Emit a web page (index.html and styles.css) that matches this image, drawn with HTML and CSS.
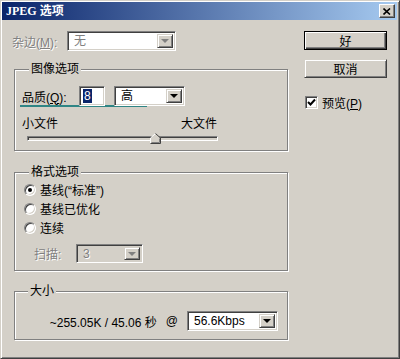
FILE: index.html
```html
<!DOCTYPE html>
<html lang="zh-CN">
<head>
    <meta charset="UTF-8">
    <title>JPEG 选项</title>
    <link rel="stylesheet" href="styles.css">
</head>
<body>
    <div class="window">
        <div class="titlebar">
            <span class="title">JPEG 选项</span>
            <div class="close-button">
                <svg width="8" height="7" viewBox="0 0 8 7">
                    <path d="M0.5 0.5 L7 6.5 M7 0.5 L0.5 6.5" stroke="#000" stroke-width="1.6" fill="none"/>
                </svg>
            </div>
        </div>

        <div class="body">
            <div class="main">
                <div class="matte-row">
                    <span class="matte-label disabled">杂边(<u>M</u>):</span>
                    <div class="combo sunken matte-combo">
                        <span class="combo-text disabled">无</span>
                        <span class="combo-arrow raised"><i class="arrow disabled-arrow"></i></span>
                    </div>
                </div>

                <div class="group group-image">
                    <div class="group-title">图像选项</div>
                    <div class="quality-row">
                        <span class="quality-label">品质(<u>Q</u>):</span>
                        <div class="text-input sunken"><span class="selected-text">8</span></div>
                        <div class="combo sunken quality-combo">
                            <span class="combo-text">高</span>
                            <span class="combo-arrow raised"><i class="arrow"></i></span>
                        </div>
                    </div>
                    <div class="focus-line"></div>
                    <div class="size-labels">
                        <span>小文件</span>
                        <span>大文件</span>
                    </div>
                    <div class="slider">
                        <div class="track sunken"></div>
                        <svg class="thumb" width="11" height="11" viewBox="0 0 11 11">
                            <polygon points="0.5,10.5 0.5,5 5.5,0.5 10.5,5 10.5,10.5" fill="#d4d0c8"/>
                            <polyline points="0.5,10 0.5,5 5.5,0.5" stroke="#fff" fill="none"/>
                            <polyline points="5.5,0.5 10.5,5 10.5,10.5 0.5,10.5" stroke="#404040" fill="none"/>
                            <polyline points="9.5,5.5 9.5,9.5 1.5,9.5" stroke="#808080" fill="none"/>
                        </svg>
                    </div>
                </div>

                <div class="group group-format">
                    <div class="group-title">格式选项</div>
                    <div class="radio-row">
                        <span class="radio sunken checked"></span>
                        <span>基线(“标准”)</span>
                    </div>
                    <div class="radio-row">
                        <span class="radio sunken"></span>
                        <span>基线已优化</span>
                    </div>
                    <div class="radio-row">
                        <span class="radio sunken"></span>
                        <span>连续</span>
                    </div>
                    <div class="scan-row">
                        <span class="scan-label disabled">扫描:</span>
                        <div class="combo sunken scan-combo">
                            <span class="combo-text disabled">3</span>
                            <span class="combo-arrow raised"><i class="arrow disabled-arrow"></i></span>
                        </div>
                    </div>
                </div>

                <div class="group group-size">
                    <div class="group-title">大小</div>
                    <div class="size-row">
                        <span class="size-text">~255.05K / 45.06 秒</span>
                        <span class="at">@</span>
                        <div class="combo sunken speed-combo">
                            <span class="combo-text">56.6Kbps</span>
                            <span class="combo-arrow raised"><i class="arrow"></i></span>
                        </div>
                    </div>
                </div>
            </div>

            <div class="side">
                <div class="button raised default-button">好</div>
                <div class="button raised">取消</div>
                <label class="check-row">
                    <span class="checkbox sunken">
                        <svg width="9" height="9" viewBox="0 0 9 9">
                            <polyline points="1,4 3.5,6.5 8,1.5" stroke="#000" stroke-width="2" fill="none"/>
                        </svg>
                    </span>
                    <span>预览(<u>P</u>)</span>
                </label>
            </div>
        </div>
    </div>
</body>
</html>
```

FILE: styles.css
```css
body {
    margin: 0;
    background: #d4d0c8;
    font-family: "Liberation Sans", "Noto Sans CJK SC", sans-serif;
    font-size: 12px;
    color: #000;
}
.window {
    width: 400px;
    height: 359px;
    box-sizing: border-box;
    background: #d4d0c8;
    border: 1px solid;
    border-color: #d4d0c8 #404040 #404040 #d4d0c8;
    box-shadow: inset 1px 1px #fff, inset -1px -1px #808080;
    padding: 1px 2px 2px 1px;
}
.titlebar {
    height: 18px;
    background: linear-gradient(to right, #0a246a, #a6caf0);
    display: flex;
    align-items: center;
    justify-content: space-between;
    padding: 0 2px 0 4px;
}
.title {
    color: #fff;
    font-weight: bold;
    font-family: "Liberation Serif", "Noto Sans CJK SC", serif;
    font-size: 12px;
    line-height: 14px;
}
.close-button {
    width: 16px;
    height: 14px;
    box-sizing: border-box;
    background: #d4d0c8;
    border: 1px solid;
    border-color: #fff #404040 #404040 #fff;
    box-shadow: inset -1px -1px #808080;
    display: flex;
    align-items: center;
    justify-content: center;
}

.raised {
    background: #d4d0c8;
    border: 1px solid;
    border-color: #d4d0c8 #404040 #404040 #d4d0c8;
    box-shadow: inset 1px 1px #fff, inset -1px -1px #808080;
    box-sizing: border-box;
}
.sunken {
    border: 1px solid;
    border-color: #808080 #fff #fff #808080;
    box-shadow: inset 1px 1px #404040, inset -1px -1px #d4d0c8;
    box-sizing: border-box;
}
.disabled {
    color: #808080;
    text-shadow: 1px 1px #fff;
}

.body {
    display: flex;
}
.main {
    width: 274px;
    margin-left: 12px;
}
.side {
    margin-left: 16px;
    margin-top: 11px;
    width: 83px;
}

.matte-row {
    display: flex;
    align-items: center;
    margin-top: 11px;
    margin-left: -2px;
}
.matte-label {
    width: 55px;
}

.combo {
    display: flex;
    background: #fff;
    padding: 2px;
    height: 20px;
}
.combo-text {
    flex: 1;
    display: flex;
    align-items: center;
    padding-left: 4px;
    line-height: 14px;
}
.combo-arrow {
    width: 16px;
    display: flex;
    align-items: center;
    justify-content: center;
}
.arrow {
    width: 0;
    height: 0;
    border-left: 4px solid transparent;
    border-right: 4px solid transparent;
    border-top: 4px solid #000;
}
.disabled-arrow {
    border-top-color: #808080;
}
.matte-combo {
    width: 109px;
}

.group {
    border: 1px solid #808080;
    box-shadow: inset 1px 1px #fff, 1px 1px #fff;
    width: 274px;
    box-sizing: border-box;
}
.group-title {
    width: fit-content;
    margin: -8px 0 0 13px;
    padding: 0 2px;
    background: #d4d0c8;
    line-height: 14px;
}

.group-image {
    margin-top: 18px;
    padding: 0 0 6px 7px;
}
.group-image .group-title {
    margin-left: 7px;
}
.quality-row {
    display: flex;
    align-items: center;
    margin-top: 10px;
}
.quality-label {
    width: 57px;
}
.text-input {
    width: 26px;
    height: 20px;
    background: #fff;
    padding: 2px 0 0 3px;
    line-height: 14px;
}
.selected-text {
    background: #0a246a;
    color: #fff;
    display: inline-block;
    padding: 0 1px;
}
.quality-combo {
    width: 71px;
    margin-left: 9px;
}
.focus-line {
    width: 127px;
    height: 2px;
    margin: -1px 0 0 -2px;
    background: #2f8585;
}
.size-labels {
    display: flex;
    justify-content: space-between;
    width: 195px;
    margin-top: 10px;
    line-height: 14px;
}
.slider {
    position: relative;
    height: 11px;
    margin-top: 2px;
}
.track {
    position: absolute;
    left: 5px;
    top: 3px;
    width: 191px;
    height: 5px;
    background: #d4d0c8;
}
.thumb {
    position: absolute;
    left: 128px;
    top: 0;
}

.group-format {
    margin-top: 21px;
    padding: 0 0 7px 9px;
}
.group-format .group-title {
    margin-left: 5px;
}
.radio-row {
    display: flex;
    align-items: center;
    gap: 4px;
    height: 19px;
}
.group-title + .radio-row {
    margin-top: 1px;
}
.radio {
    width: 12px;
    height: 12px;
    border-radius: 50%;
    background: #fff;
    display: flex;
    align-items: center;
    justify-content: center;
}
.radio.checked::after {
    content: "";
    width: 4px;
    height: 4px;
    border-radius: 50%;
    background: #000;
}
.scan-row {
    display: flex;
    align-items: center;
    margin-top: 7px;
    margin-left: 10px;
}
.scan-label {
    width: 42px;
}
.scan-combo {
    width: 67px;
    height: 19px;
    background: #d4d0c8;
}

.group-size {
    margin-top: 20px;
    padding: 0 9px 8px 0;
}
.size-row {
    display: flex;
    align-items: center;
    justify-content: flex-end;
    margin-top: 13px;
}
.at {
    margin: 0 9px 0 9px;
}
.speed-combo {
    width: 91px;
}

.button {
    height: 19px;
    display: flex;
    align-items: center;
    justify-content: center;
    margin-bottom: 9px;
}
.default-button {
    border-color: #000;
    box-shadow: inset 1px 1px #fff, inset -1px -1px #404040, inset -2px -2px #808080;
}
.check-row {
    display: flex;
    align-items: center;
    gap: 4px;
    margin-top: 16px;
    margin-left: 1px;
}
.checkbox {
    width: 13px;
    height: 13px;
    background: #fff;
    display: flex;
    align-items: center;
    justify-content: center;
}
```
